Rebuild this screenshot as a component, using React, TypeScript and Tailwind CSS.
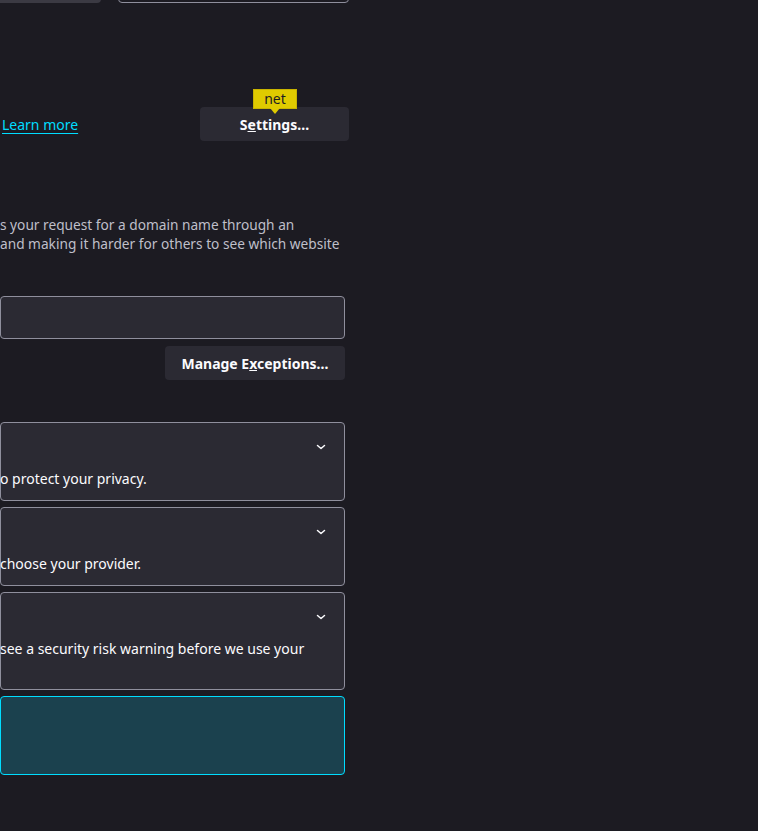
import React from "react";

const Chevron = () => (
  <svg width="12" height="12" viewBox="0 0 12 12" className="block">
    <polyline points="2.5,4.5 6,7.5 9.5,4.5" fill="none" stroke="#fbfbfe" strokeWidth="1.5" strokeLinecap="round" strokeLinejoin="round" />
  </svg>
);

const Card = ({ text, tall }: { text: string; tall?: boolean }) => (
  <div className={`rounded-[4px] border border-[#8f8f9d] bg-[#2b2a33] ${tall ? "h-[98px]" : "h-[79px]"} flex flex-col`}>
    <div className="flex justify-end pr-[17px] pt-[18px] h-[46px]">
      <Chevron />
    </div>
    <div className="text-[14px] leading-[20px] text-[#fbfbfe] whitespace-nowrap -ml-[1px]">{text}</div>
  </div>
);

export default function App() {
  return (
    <div
      className="w-[758px] h-[831px] bg-[#1c1b22] overflow-hidden text-[#fbfbfe]"
      style={{ fontFamily: '"Noto Sans", "Open Sans", sans-serif' }}
    >
      <div className="w-[349px] flex flex-col">
        {/* top clipped row */}
        <div className="flex -mt-[30px] h-[33px]">
          <div className="w-[101px] h-full bg-[#3b3a43] rounded-br-[4px]" />
          <div className="ml-[17px] w-[231px] h-full border border-[#8f8f9d] rounded-[4px]" />
        </div>

        {/* learn more / settings row */}
        <div className="flex items-center justify-between mt-[104px] h-[34px]">
          <a className="ml-[2px] text-[14px] text-[#00ddff] underline underline-offset-[3px]">Learn more</a>
          <div className="relative w-[149px] h-[34px] rounded-[4px] bg-[#2b2a33] flex items-center justify-center text-[14px] font-bold">
            <span>
              S<span className="underline">e</span>ttings…
            </span>
            <div className="absolute left-[53px] -top-[18px] w-[44px] h-[20px] bg-[#e0cb00] border border-[#c9b400] flex items-center justify-center text-[14px] font-normal text-[#1c1b22] leading-none">
              net
              <div className="absolute left-1/2 -translate-x-1/2 -bottom-[6px] w-0 h-0 border-l-[5px] border-r-[5px] border-t-[6px] border-l-transparent border-r-transparent border-t-[#e0cb00]" />
            </div>
          </div>
        </div>

        {/* description */}
        <div className="mt-[74px] text-[13.7px] leading-[19px] text-[#bfbfc9] whitespace-nowrap">
          <div>s your request for a domain name through an</div>
          <div>and making it harder for others to see which website</div>
        </div>

        {/* input */}
        <div className="mt-[43px] w-[345px] h-[43px] rounded-[4px] border border-[#8f8f9d] bg-[#2b2a33]" />

        {/* manage exceptions */}
        <div className="flex justify-end w-[345px] mt-[7px]">
          <div className="w-[180px] h-[34px] rounded-[4px] bg-[#2b2a33] flex items-center justify-center text-[14px] font-bold">
            <span>
              Manage E<span className="underline">x</span>ceptions…
            </span>
          </div>
        </div>

        {/* cards */}
        <div className="mt-[42px] w-[345px] flex flex-col gap-[6px]">
          <Card text="o protect your privacy." />
          <Card text="choose your provider." />
          <Card text="see a security risk warning before we use your" tall />
          <div className="h-[79px] rounded-[4px] border border-[#00ddff] bg-[#1b414e]" />
        </div>
      </div>
    </div>
  );
}
